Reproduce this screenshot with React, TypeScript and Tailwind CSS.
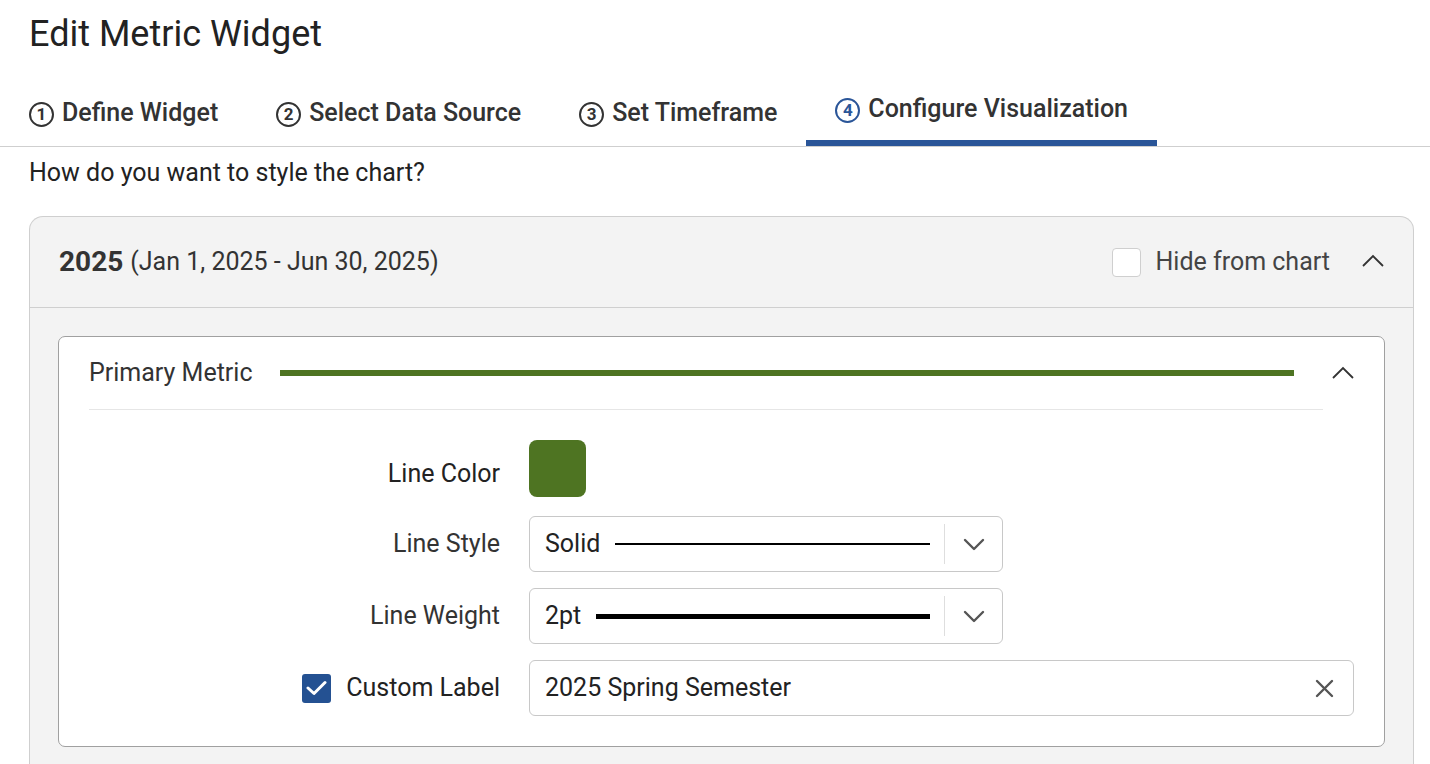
import React from "react";

const tabs = [
  { n: "1", label: "Define Widget" },
  { n: "2", label: "Select Data Source" },
  { n: "3", label: "Set Timeframe" },
  { n: "4", label: "Configure Visualization", active: true },
];

function StepNumber({ n, active }: { n: string; active?: boolean }) {
  return (
    <span
      className={
        "mt-[3px] flex h-[25px] w-[25px] items-center justify-center rounded-full border-[2.5px] text-[17px] font-bold leading-none " +
        (active ? "border-[#2a5598] text-[#2a5598]" : "border-[#333] text-[#333]")
      }
    >
      {n}
    </span>
  );
}

function ChevronUp() {
  return (
    <svg width="22" height="13" viewBox="0 0 22 13" fill="none" stroke="#333" strokeWidth="1.8">
      <polyline points="1,12 11,2 21,12" />
    </svg>
  );
}

function ChevronDown() {
  return (
    <svg width="22" height="13" viewBox="0 0 22 13" fill="none" stroke="#555" strokeWidth="2.4" strokeLinecap="round" strokeLinejoin="round">
      <polyline points="2,2 11,11 20,2" />
    </svg>
  );
}

function LineSelect({ value, weight }: { value: string; weight: number }) {
  return (
    <div className="flex h-[56px] w-[474px] items-center rounded-[6px] border border-[#c8c8c8] bg-white pl-[15px]">
      <span className="text-[25px] text-[#222]">{value}</span>
      <span className="ml-[15px] mr-[14px] flex-1 bg-black" style={{ height: weight }} />
      <span className="h-[40px] w-px bg-[#dedede]" />
      <span className="flex w-[57px] items-center justify-center">
        <ChevronDown />
      </span>
    </div>
  );
}

export default function App() {
  return (
    <div className="min-h-screen bg-white font-['Roboto',sans-serif] text-[#222]">
      <h1 className="pl-[29px] pt-[13px] text-[36px] leading-[42px] text-[#222]">Edit Metric Widget</h1>

      <nav className="mt-[25px] flex border-b border-[#cfcfcf]">
        {tabs.map((t) => (
          <div
            key={t.n}
            className={
              "flex h-[66px] items-center gap-[8px] px-[29px] text-[25px] font-medium " +
              (t.active ? "border-b-[6px] border-[#2a5598] pb-[2px] text-[#333]" : "text-[#333]")
            }
          >
            <StepNumber n={t.n} active={t.active} />
            <span>{t.label}</span>
          </div>
        ))}
      </nav>

      <p className="pl-[29px] pt-[11px] text-[25px] leading-[30px] text-[#222]">How do you want to style the chart?</p>

      <section className="ml-[29px] mt-[28px] w-[1385px] rounded-t-[14px] border border-b-0 border-[#cfcfcf] bg-[#f3f3f3]">
        <header className="flex h-[91px] items-center border-b border-[#cfcfcf] pl-[29px] pr-[29px]">
          <span className="text-[28px] font-bold text-[#333]">2025</span>
          <span className="ml-[7px] text-[25px] text-[#333]">(Jan 1, 2025 - Jun 30, 2025)</span>
          <label className="ml-auto flex items-center gap-[15px]">
            <span className="h-[29px] w-[29px] rounded-[4px] border border-[#cfcfcf] bg-white" />
            <span className="text-[25px] text-[#444]">Hide from chart</span>
          </label>
          <span className="ml-[32px] -mt-[3px]">
            <ChevronUp />
          </span>
        </header>

        <div className="px-[28px] pb-[20px] pt-[28px]">
          <div className="rounded-[7px] border border-[#a0a0a0] bg-white px-[30px] pb-[30px]">
            <div className="flex h-[73px] items-center">
              <div className="flex h-full flex-1 items-center border-b border-[#e6e6e6]">
                <span className="text-[25px] text-[#333]">Primary Metric</span>
                <span className="ml-[28px] mr-[29px] h-[6px] flex-1 bg-[#4e7422]" />
              </div>
              <span className="ml-[9px] -mt-[2px]">
                <ChevronUp />
              </span>
            </div>

            <div className="mt-[30px] grid grid-cols-[411px_1fr] items-center gap-x-[29px] gap-y-[16px]">
              <span className="pt-[8px] text-right text-[25px] text-[#222]">Line Color</span>
              <span className="mb-[3px] h-[57px] w-[57px] rounded-[8px] bg-[#4e7422]" />

              <span className="text-right text-[25px] text-[#333]">Line Style</span>
              <LineSelect value="Solid" weight={2} />

              <span className="text-right text-[25px] text-[#333]">Line Weight</span>
              <LineSelect value="2pt" weight={5} />

              <label className="flex items-center justify-end gap-[15px]">
                <span className="flex h-[29px] w-[29px] items-center justify-center rounded-[3px] bg-[#245192]">
                  <svg width="21" height="16" viewBox="0 0 21 16" fill="none" stroke="white" strokeWidth="3" strokeLinecap="round" strokeLinejoin="round">
                    <polyline points="2,8 8,13.5 19,2.5" />
                  </svg>
                </span>
                <span className="text-[25px] text-[#222]">Custom Label</span>
              </label>
              <div className="flex h-[56px] items-center rounded-[6px] border border-[#c8c8c8] pl-[15px] pr-[19px]">
                <span className="flex-1 text-[25px] text-[#222]">2025 Spring Semester</span>
                <svg width="19" height="19" viewBox="0 0 19 19" stroke="#555" strokeWidth="2.4" strokeLinecap="round">
                  <line x1="2" y1="2" x2="17" y2="17" />
                  <line x1="17" y1="2" x2="2" y2="17" />
                </svg>
              </div>
            </div>
          </div>
        </div>
      </section>
    </div>
  );
}
